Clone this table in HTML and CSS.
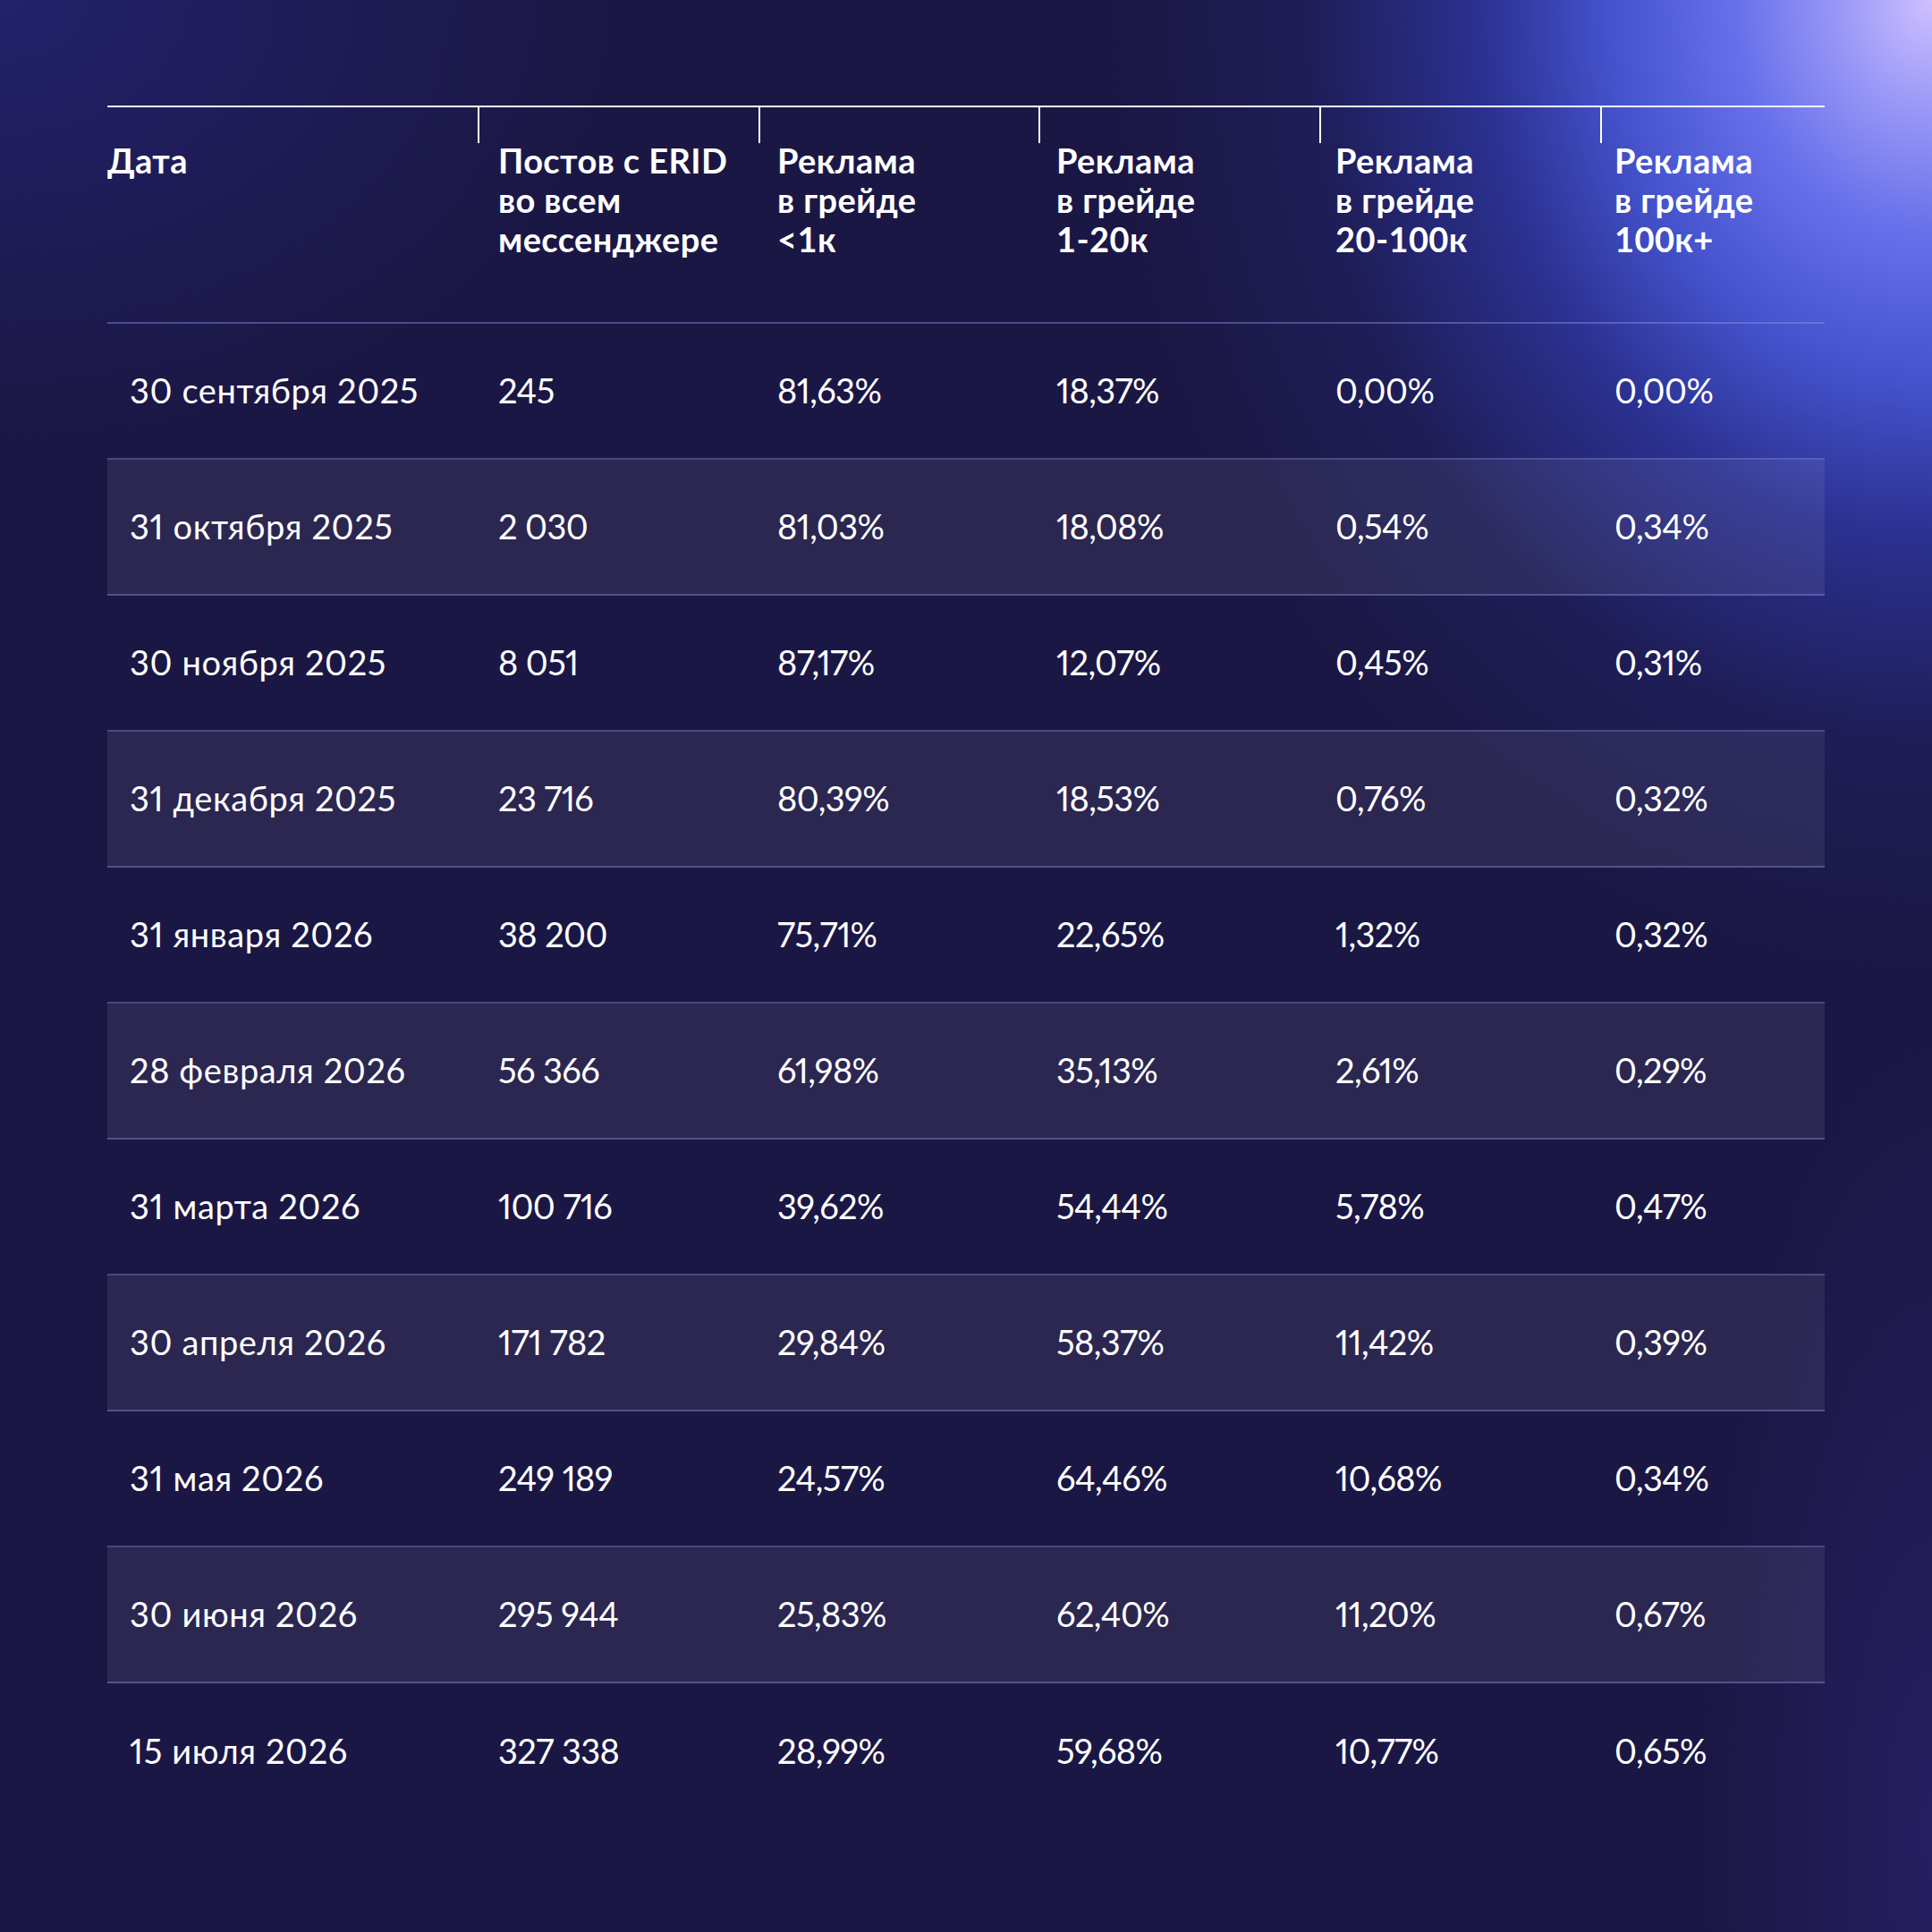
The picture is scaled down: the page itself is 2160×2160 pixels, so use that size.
FILE: index.html
```html
<!DOCTYPE html>
<html lang="ru">
<head>
<meta charset="utf-8">
<title>Реклама по грейдам</title>
<link rel="stylesheet" href="styles.css">
</head>
<body>
<main class="page">
  <section class="table">
    <div class="ticks">
      <span class="tick"></span><span class="tick"></span><span class="tick"></span><span class="tick"></span><span class="tick"></span><span class="tick"></span>
    </div>
    <div class="head">
      <div class="hcell">Дата</div>
      <div class="hcell">Постов с ERID<br>во всем<br>мессенджере</div>
      <div class="hcell">Реклама<br>в грейде<br>&lt;1к</div>
      <div class="hcell">Реклама<br>в грейде<br>1-20к</div>
      <div class="hcell">Реклама<br>в грейде<br>20-100к</div>
      <div class="hcell">Реклама<br>в грейде<br>100к+</div>
    </div>
    <div class="row"><div class="cell date">30 сентября 2025</div><div class="cell">245</div><div class="cell">81,63%</div><div class="cell">18,37%</div><div class="cell">0,00%</div><div class="cell">0,00%</div></div>
    <div class="row alt"><div class="cell date">31 октября 2025</div><div class="cell">2 030</div><div class="cell">81,03%</div><div class="cell">18,08%</div><div class="cell">0,54%</div><div class="cell">0,34%</div></div>
    <div class="row"><div class="cell date">30 ноября 2025</div><div class="cell">8 051</div><div class="cell">87,17%</div><div class="cell">12,07%</div><div class="cell">0,45%</div><div class="cell">0,31%</div></div>
    <div class="row alt"><div class="cell date">31 декабря 2025</div><div class="cell">23 716</div><div class="cell">80,39%</div><div class="cell">18,53%</div><div class="cell">0,76%</div><div class="cell">0,32%</div></div>
    <div class="row"><div class="cell date">31 января 2026</div><div class="cell">38 200</div><div class="cell">75,71%</div><div class="cell">22,65%</div><div class="cell">1,32%</div><div class="cell">0,32%</div></div>
    <div class="row alt"><div class="cell date">28 февраля 2026</div><div class="cell">56 366</div><div class="cell">61,98%</div><div class="cell">35,13%</div><div class="cell">2,61%</div><div class="cell">0,29%</div></div>
    <div class="row"><div class="cell date">31 марта 2026</div><div class="cell">100 716</div><div class="cell">39,62%</div><div class="cell">54,44%</div><div class="cell">5,78%</div><div class="cell">0,47%</div></div>
    <div class="row alt"><div class="cell date">30 апреля 2026</div><div class="cell">171 782</div><div class="cell">29,84%</div><div class="cell">58,37%</div><div class="cell">11,42%</div><div class="cell">0,39%</div></div>
    <div class="row"><div class="cell date">31 мая 2026</div><div class="cell">249 189</div><div class="cell">24,57%</div><div class="cell">64,46%</div><div class="cell">10,68%</div><div class="cell">0,34%</div></div>
    <div class="row alt"><div class="cell date">30 июня 2026</div><div class="cell">295 944</div><div class="cell">25,83%</div><div class="cell">62,40%</div><div class="cell">11,20%</div><div class="cell">0,67%</div></div>
    <div class="row last"><div class="cell date">15 июля 2026</div><div class="cell">327 338</div><div class="cell">28,99%</div><div class="cell">59,68%</div><div class="cell">10,77%</div><div class="cell">0,65%</div></div>
  </section>
</main>
</body>
</html>
```
FILE: styles.css
```css
* { box-sizing: border-box; }
html, body { margin: 0; padding: 0; }
body {
  width: 2160px;
  height: 2160px;
  overflow: hidden;
  font-family: Lato, "Noto Sans", sans-serif;
  color: #ffffff;
  background-color: #1b1744;
  background-image:
    radial-gradient(ellipse 1100px 1300px at 100% 0%, #cfc0ff 0%, #9c9af7 9%, #6670ea 20%, #4452cc 33%, rgba(48, 58, 170, 0.75) 46%, rgba(36, 40, 120, 0.35) 64%, rgba(27, 23, 68, 0) 84%),
    radial-gradient(ellipse 700px 500px at 0% 0%, #22216a 0%, rgba(27, 23, 68, 0) 100%),
    radial-gradient(ellipse 260px 900px at 100% 95%, rgba(38, 32, 100, 0.9) 0%, rgba(27, 23, 68, 0) 100%);
}
.page {
  padding: 118px 120px 0 120px;
}
.table {
  width: 1920px;
  border-top: 2px solid #ffffff;
}
.ticks {
  display: grid;
  grid-template-columns: 414px 314px 313px 314px 314px 251px;
  height: 40px;
}
.tick + .tick {
  border-left: 2px solid #ffffff;
}
.head, .row {
  display: grid;
  grid-template-columns: 437px 312px 312px 312px 312px 235px;
}
.head {
  height: 202px;
  border-bottom: 2px solid rgba(150, 150, 230, 0.42);
}
.hcell {
  font-weight: 700;
  font-size: 38px;
  line-height: 44px;
  letter-spacing: 0.4px;
  margin-top: -3px;
}
.row {
  height: 152px;
  align-items: center;
  border-bottom: 2px solid rgba(150, 150, 230, 0.38);
}
.row.alt {
  background: rgba(255, 255, 255, 0.07);
}
.row.last {
  border-bottom: none;
}
.cell {
  font-size: 38px;
  font-weight: 400;
  line-height: 44px;
  white-space: nowrap;
  font-variant-numeric: proportional-nums;
  letter-spacing: -0.6px;
  padding-bottom: 3px;
}
.cell.date {
  padding-left: 25px;
  letter-spacing: 0.6px;
}
```
